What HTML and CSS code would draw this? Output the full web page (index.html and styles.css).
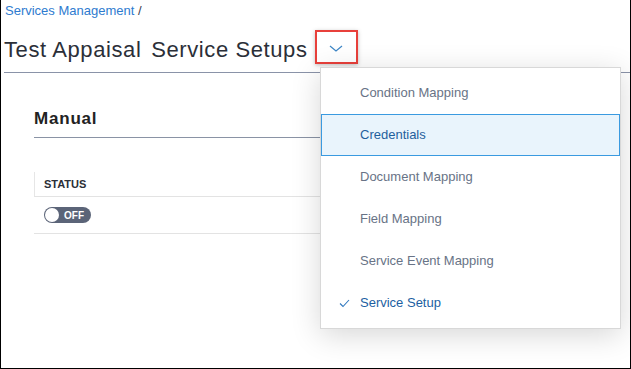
FILE: index.html
```html
<!DOCTYPE html>
<html lang="en">
<head>
    <meta charset="UTF-8">
    <title>Service Setups</title>
    <link rel="stylesheet" href="styles.css">
</head>
<body>

    <div class="frame">
        <div class="crumbs"><a href="#">Services Management</a> /</div>

        <div class="title-row">
            <h1>Test Appaisal <span class="sub">Service Setups</span></h1>
            <button class="menu-btn">
                <svg width="14" height="7" viewBox="0 0 14 7"><path d="M1 1 L7 6 L13 1" fill="none" stroke="#3d86c6" stroke-width="1.2"/></svg>
            </button>
        </div>

        <div class="panel">
            <h2>Manual</h2>
            <div class="table">
                <div class="thead">STATUS</div>
                <div class="trow">
                    <span class="toggle"><span class="knob"></span>OFF</span>
                </div>
            </div>
        </div>

        <ul class="menu">
            <li>Condition Mapping</li>
            <li class="hover">Credentials</li>
            <li>Document Mapping</li>
            <li>Field Mapping</li>
            <li>Service Event Mapping</li>
            <li class="current">
                <svg class="check" width="11" height="9" viewBox="0 0 11 9"><path d="M1 4.5 L4 7.5 L10 1" fill="none" stroke="#2f78bf" stroke-width="1.1"/></svg>
                Service Setup
            </li>
        </ul>
    </div>

</body>
</html>
```

FILE: styles.css
```css
* {
    margin: 0;
    padding: 0;
    box-sizing: border-box;
    font-family: 'Liberation Sans', Arial, sans-serif;
}
body {
    background: #fff;
    color: #2b2f38;
}
.frame {
    position: relative;
    width: 631px;
    height: 369px;
    border: 1px solid #000;
    border-top: none;
    padding-left: 3px;
    overflow: hidden;
}
.crumbs {
    padding-top: 3px;
    padding-left: 1px;
    font-size: 13px;
    line-height: 16px;
    color: #3a4150;
}
.crumbs a {
    color: #2e7bcf;
    text-decoration: none;
}
.title-row {
    display: flex;
    align-items: center;
    height: 34px;
    margin-top: 11px;
    margin-bottom: 8px;
}
h1 {
    font-size: 22px;
    font-weight: normal;
    letter-spacing: 0.6px;
    line-height: 24px;
    padding-top: 6px;
    color: #2b2f38;
}
h1 .sub {
    margin-left: 3px;
}
.menu-btn {
    width: 43px;
    height: 34px;
    margin-left: 7px;
    background: #fff;
    border: 2px solid #e8403b;
    box-shadow: 0 1px 4px rgba(0,0,0,0.25);
    display: flex;
    align-items: center;
    justify-content: center;
    padding-top: 2px;
}
.panel {
    border-top: 1px solid #8a93a8;
    padding-left: 30px;
}
h2 {
    margin-top: 36px;
    font-size: 17px;
    line-height: 20px;
    font-weight: bold;
    letter-spacing: 0.8px;
    color: #222;
    padding-bottom: 8px;
    border-bottom: 1px solid #8a93a5;
    width: 570px;
}
.table {
    margin-top: 34px;
    width: 570px;
}
.thead {
    height: 25px;
    line-height: 24px;
    padding-left: 9px;
    font-size: 11px;
    font-weight: bold;
    color: #2b2f38;
    border-left: 1px solid #e6e6e6;
    border-bottom: 1px solid #e3e3e3;
}
.trow {
    height: 37px;
    padding-left: 10px;
    display: flex;
    align-items: center;
    border-bottom: 1px solid #e3e3e3;
}
.toggle {
    display: flex;
    align-items: center;
    width: 47px;
    height: 16px;
    border-radius: 8px;
    background: #5b6478;
    color: #fff;
    font-size: 10px;
    font-weight: bold;
    padding-left: 1px;
}
.knob {
    width: 14px;
    height: 14px;
    border-radius: 50%;
    background: #fff;
    margin-right: 5px;
}
.menu {
    position: absolute;
    left: 319px;
    top: 67px;
    width: 301px;
    list-style: none;
    background: #fff;
    border: 1px solid #d8d8d8;
    padding: 4px 0;
    box-shadow: 0 6px 28px rgba(0,0,0,0.16);
}
.menu li {
    position: relative;
    height: 42px;
    line-height: 40px;
    padding-left: 38px;
    font-size: 13px;
    color: #687386;
    border: 1px solid transparent;
}
.menu li.hover {
    background: #e9f4fc;
    border-color: #3a9ae0;
    color: #1f5f9c;
}
.menu li.current {
    color: #1d5fa2;
}
.menu .check {
    position: absolute;
    left: 17px;
    top: 16px;
}
```
